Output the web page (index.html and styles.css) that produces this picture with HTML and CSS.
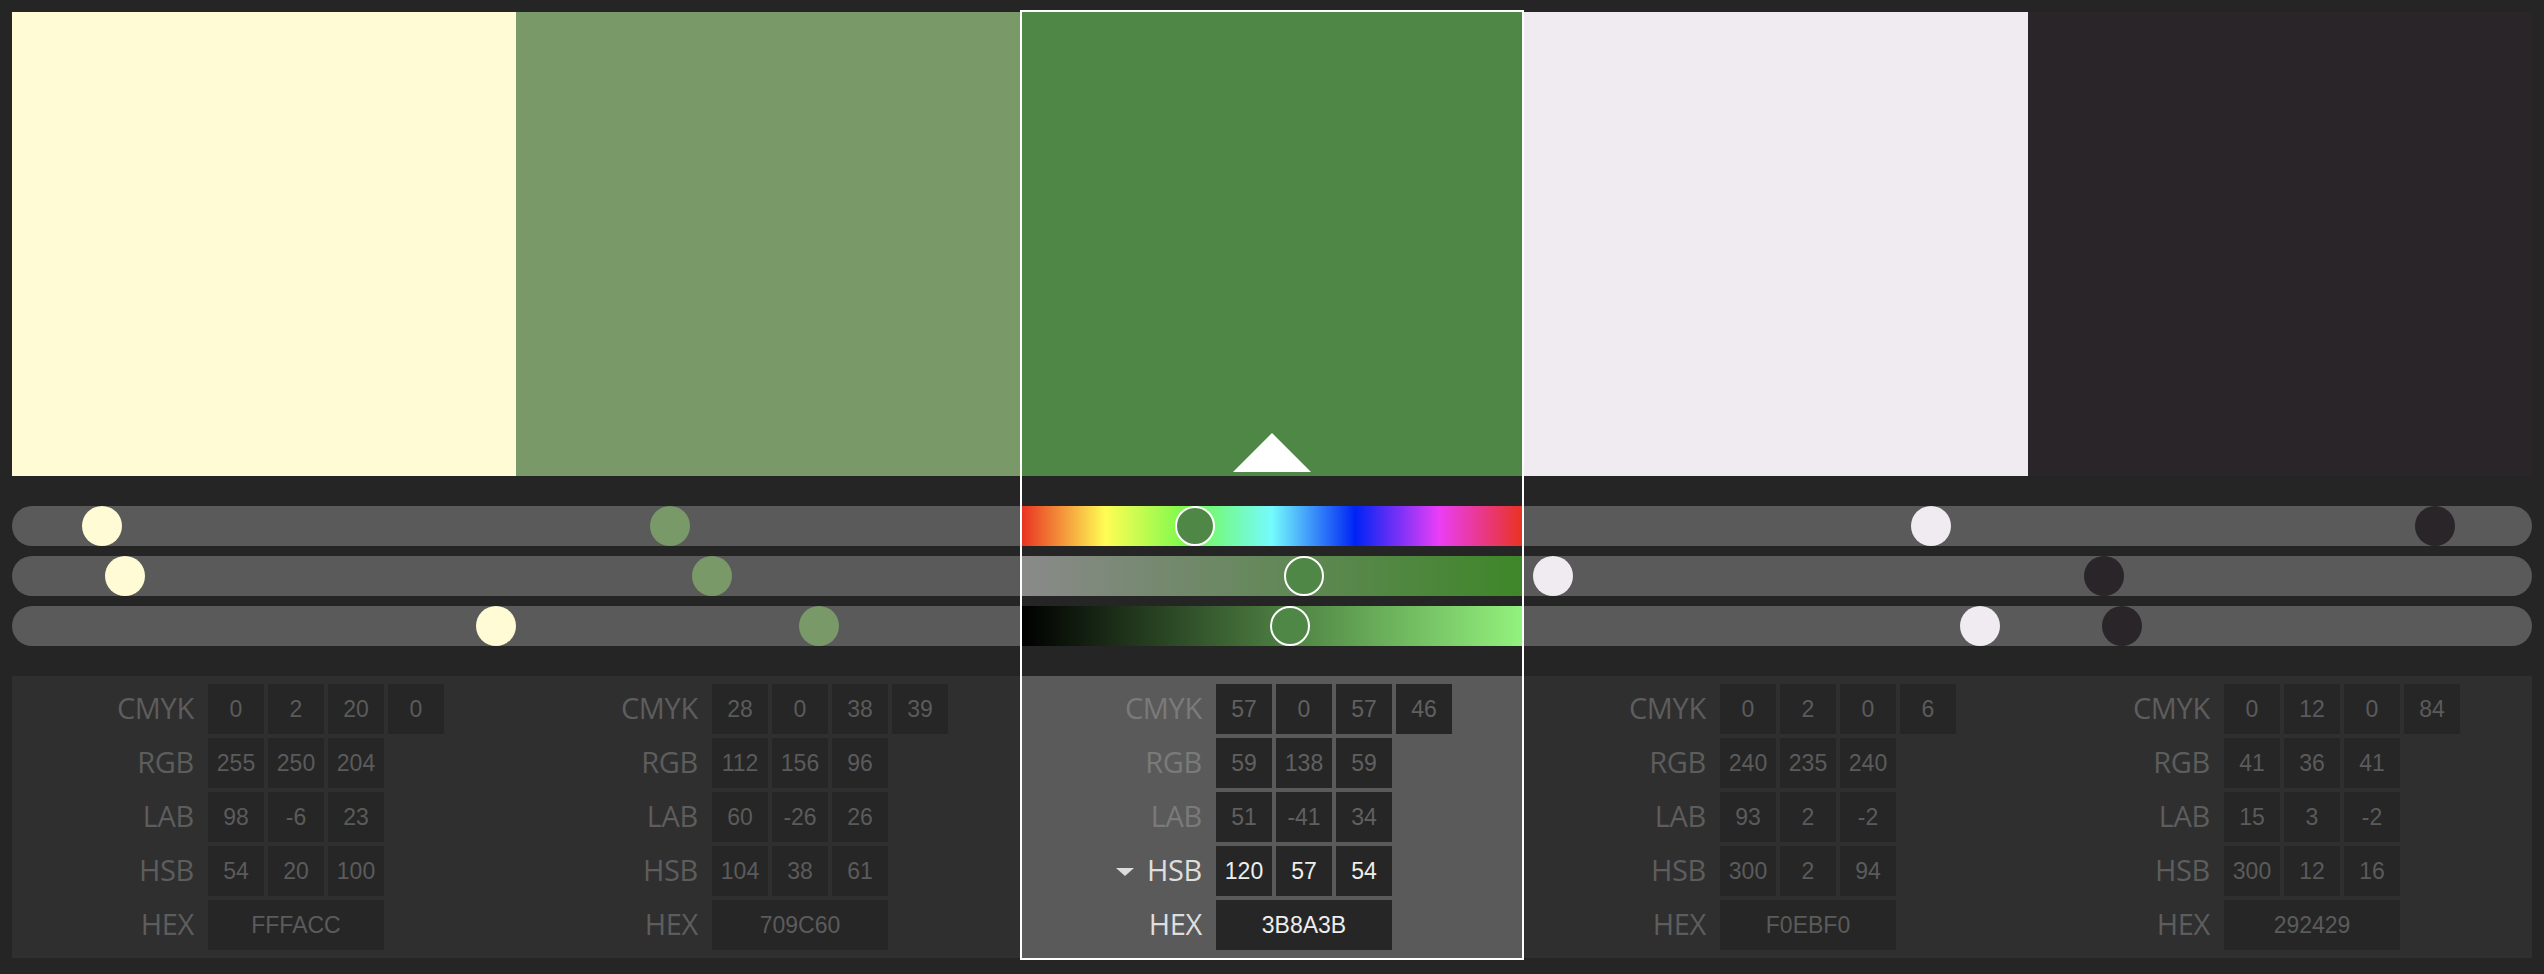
FILE: index.html
```html
<!DOCTYPE html>
<html>
<head>
<meta charset="utf-8">
<title>Color Theme</title>
<link rel="stylesheet" href="styles.css">
</head>
<body>
<div class="app">

  <div class="col c1">
    <div class="swatch"></div>
    <div class="sliders">
      <div class="track"><span class="thumb" style="--v:0.15"></span></div>
      <div class="track"><span class="thumb" style="--v:0.20"></span></div>
      <div class="track"><span class="thumb" style="--v:1"></span></div>
    </div>
    <div class="panel">
      <div class="grid">
        <div class="label">CMYK</div><div class="cell">0</div><div class="cell">2</div><div class="cell">20</div><div class="cell">0</div>
        <div class="label">RGB</div><div class="cell">255</div><div class="cell">250</div><div class="cell">204</div><div class="blank"></div>
        <div class="label">LAB</div><div class="cell">98</div><div class="cell">-6</div><div class="cell">23</div><div class="blank"></div>
        <div class="label">HSB</div><div class="cell">54</div><div class="cell">20</div><div class="cell">100</div><div class="blank"></div>
        <div class="label">HEX</div><div class="cell hex">FFFACC</div><div class="blank"></div>
      </div>
    </div>
  </div>

  <div class="col c2">
    <div class="swatch"></div>
    <div class="sliders">
      <div class="track"><span class="thumb" style="--v:0.2889"></span></div>
      <div class="track"><span class="thumb" style="--v:0.38"></span></div>
      <div class="track"><span class="thumb" style="--v:0.61"></span></div>
    </div>
    <div class="panel">
      <div class="grid">
        <div class="label">CMYK</div><div class="cell">28</div><div class="cell">0</div><div class="cell">38</div><div class="cell">39</div>
        <div class="label">RGB</div><div class="cell">112</div><div class="cell">156</div><div class="cell">96</div><div class="blank"></div>
        <div class="label">LAB</div><div class="cell">60</div><div class="cell">-26</div><div class="cell">26</div><div class="blank"></div>
        <div class="label">HSB</div><div class="cell">104</div><div class="cell">38</div><div class="cell">61</div><div class="blank"></div>
        <div class="label">HEX</div><div class="cell hex">709C60</div><div class="blank"></div>
      </div>
    </div>
  </div>

  <div class="col c3 selected">
    <div class="swatch"><span class="pointer"></span></div>
    <div class="sliders">
      <div class="track hue"><span class="thumb" style="--v:0.3333"></span></div>
      <div class="track sat"><span class="thumb" style="--v:0.57"></span></div>
      <div class="track bri"><span class="thumb" style="--v:0.54"></span></div>
    </div>
    <div class="panel">
      <div class="grid">
        <div class="label">CMYK</div><div class="cell">57</div><div class="cell">0</div><div class="cell">57</div><div class="cell">46</div>
        <div class="label">RGB</div><div class="cell">59</div><div class="cell">138</div><div class="cell">59</div><div class="blank"></div>
        <div class="label">LAB</div><div class="cell">51</div><div class="cell">-41</div><div class="cell">34</div><div class="blank"></div>
        <div class="label active"><span class="caret"></span>HSB</div><div class="cell active">120</div><div class="cell active">57</div><div class="cell active">54</div><div class="blank"></div>
        <div class="label active">HEX</div><div class="cell hex active">3B8A3B</div><div class="blank"></div>
      </div>
    </div>
  </div>

  <div class="col c4">
    <div class="swatch"></div>
    <div class="sliders">
      <div class="track"><span class="thumb" style="--v:0.8333"></span></div>
      <div class="track"><span class="thumb" style="--v:0.02"></span></div>
      <div class="track"><span class="thumb" style="--v:0.94"></span></div>
    </div>
    <div class="panel">
      <div class="grid">
        <div class="label">CMYK</div><div class="cell">0</div><div class="cell">2</div><div class="cell">0</div><div class="cell">6</div>
        <div class="label">RGB</div><div class="cell">240</div><div class="cell">235</div><div class="cell">240</div><div class="blank"></div>
        <div class="label">LAB</div><div class="cell">93</div><div class="cell">2</div><div class="cell">-2</div><div class="blank"></div>
        <div class="label">HSB</div><div class="cell">300</div><div class="cell">2</div><div class="cell">94</div><div class="blank"></div>
        <div class="label">HEX</div><div class="cell hex">F0EBF0</div><div class="blank"></div>
      </div>
    </div>
  </div>

  <div class="col c5">
    <div class="swatch"></div>
    <div class="sliders">
      <div class="track"><span class="thumb" style="--v:0.8333"></span></div>
      <div class="track"><span class="thumb" style="--v:0.12"></span></div>
      <div class="track"><span class="thumb" style="--v:0.16"></span></div>
    </div>
    <div class="panel">
      <div class="grid">
        <div class="label">CMYK</div><div class="cell">0</div><div class="cell">12</div><div class="cell">0</div><div class="cell">84</div>
        <div class="label">RGB</div><div class="cell">41</div><div class="cell">36</div><div class="cell">41</div><div class="blank"></div>
        <div class="label">LAB</div><div class="cell">15</div><div class="cell">3</div><div class="cell">-2</div><div class="blank"></div>
        <div class="label">HSB</div><div class="cell">300</div><div class="cell">12</div><div class="cell">16</div><div class="blank"></div>
        <div class="label">HEX</div><div class="cell hex">292429</div><div class="blank"></div>
      </div>
    </div>
  </div>

</div>
</body>
</html>
```

FILE: styles.css
```css
html, body {
  margin: 0;
  padding: 0;
  background: #252525;
}

body {
  width: 2544px;
  height: 974px;
  overflow: hidden;
}

.app {
  display: flex;
  padding: 12px;
  align-items: flex-start;
}

.col {
  width: 504px;
  flex: 0 0 auto;
  display: flex;
  flex-direction: column;
}

.col.selected {
  width: 500px;
  margin: 0 2px;
  outline: 2px solid #ffffff;
}

.c1 { --c: #fffbd5; }
.c2 { --c: #7a9969; }
.c3 { --c: #4f8846; }
.c4 { --c: #f0ebf1; }
.c5 { --c: #292529; }

.swatch {
  height: 464px;
  background: var(--c);
  display: flex;
  justify-content: center;
  align-items: flex-end;
  padding-bottom: 4px;
  box-sizing: border-box;
}

.pointer {
  width: 0;
  height: 0;
  border-left: 39px solid transparent;
  border-right: 39px solid transparent;
  border-bottom: 39px solid #ffffff;
}

.sliders {
  display: flex;
  flex-direction: column;
  gap: 10px;
  margin: 30px 0;
}

.track {
  position: relative;
  height: 40px;
  background: #5a5a5a;
}

.c1 .track { border-radius: 20px 0 0 20px; }
.c5 .track { border-radius: 0 20px 20px 0; }

.thumb {
  position: absolute;
  top: 0;
  left: calc(var(--v) * (100% - 40px));
  width: 40px;
  height: 40px;
  border-radius: 50%;
  background: var(--c);
  box-sizing: border-box;
}

.selected .thumb {
  border: 2px solid #ffffff;
}

.track.hue {
  background: linear-gradient(to right,
    #e93323 0%,
    #fffd54 16.67%,
    #75f94c 33.33%,
    #74fbfd 50%,
    #0023f5 66.67%,
    #ea3ef7 83.33%,
    #e93323 100%);
}

.track.sat {
  background: linear-gradient(to right, #8a8a8a 0%, #3e8629 100%);
}

.track.bri {
  background: linear-gradient(to right, #000000 0%, #93f27d 100%);
}

.panel {
  height: 282px;
  box-sizing: border-box;
  padding: 8px 0;
  background: #2f2f2f;
  display: flex;
  justify-content: center;
}

.selected .panel {
  background: #5a5a5a;
}

.grid {
  display: grid;
  grid-template-columns: 120px repeat(4, 56px);
  grid-auto-rows: 50px;
  gap: 4px;
}

.label {
  display: flex;
  align-items: center;
  justify-content: flex-end;
  padding-right: 10px;
  padding-bottom: 3px;
  box-sizing: border-box;
  font-family: "Open Sans", "Liberation Sans", sans-serif;
  font-size: 29px;
  letter-spacing: -0.3px;
  color: #5d5d5d;
}

.selected .label {
  color: #7a7a7a;
}

.selected .label.active {
  color: #dedede;
}

.caret {
  width: 0;
  height: 0;
  border-left: 9px solid transparent;
  border-right: 9px solid transparent;
  border-top: 8px solid #dcdcdc;
  margin-right: 13px;
  margin-top: 4px;
}

.cell {
  display: flex;
  align-items: center;
  justify-content: center;
  background: #262626;
  font-family: "Liberation Sans", Arial, sans-serif;
  font-size: 23px;
  color: #5b5b5b;
}

.selected .cell {
  color: #606060;
}

.selected .cell.active {
  color: #eeeeee;
}

.cell.hex {
  grid-column: span 3;
}
```
